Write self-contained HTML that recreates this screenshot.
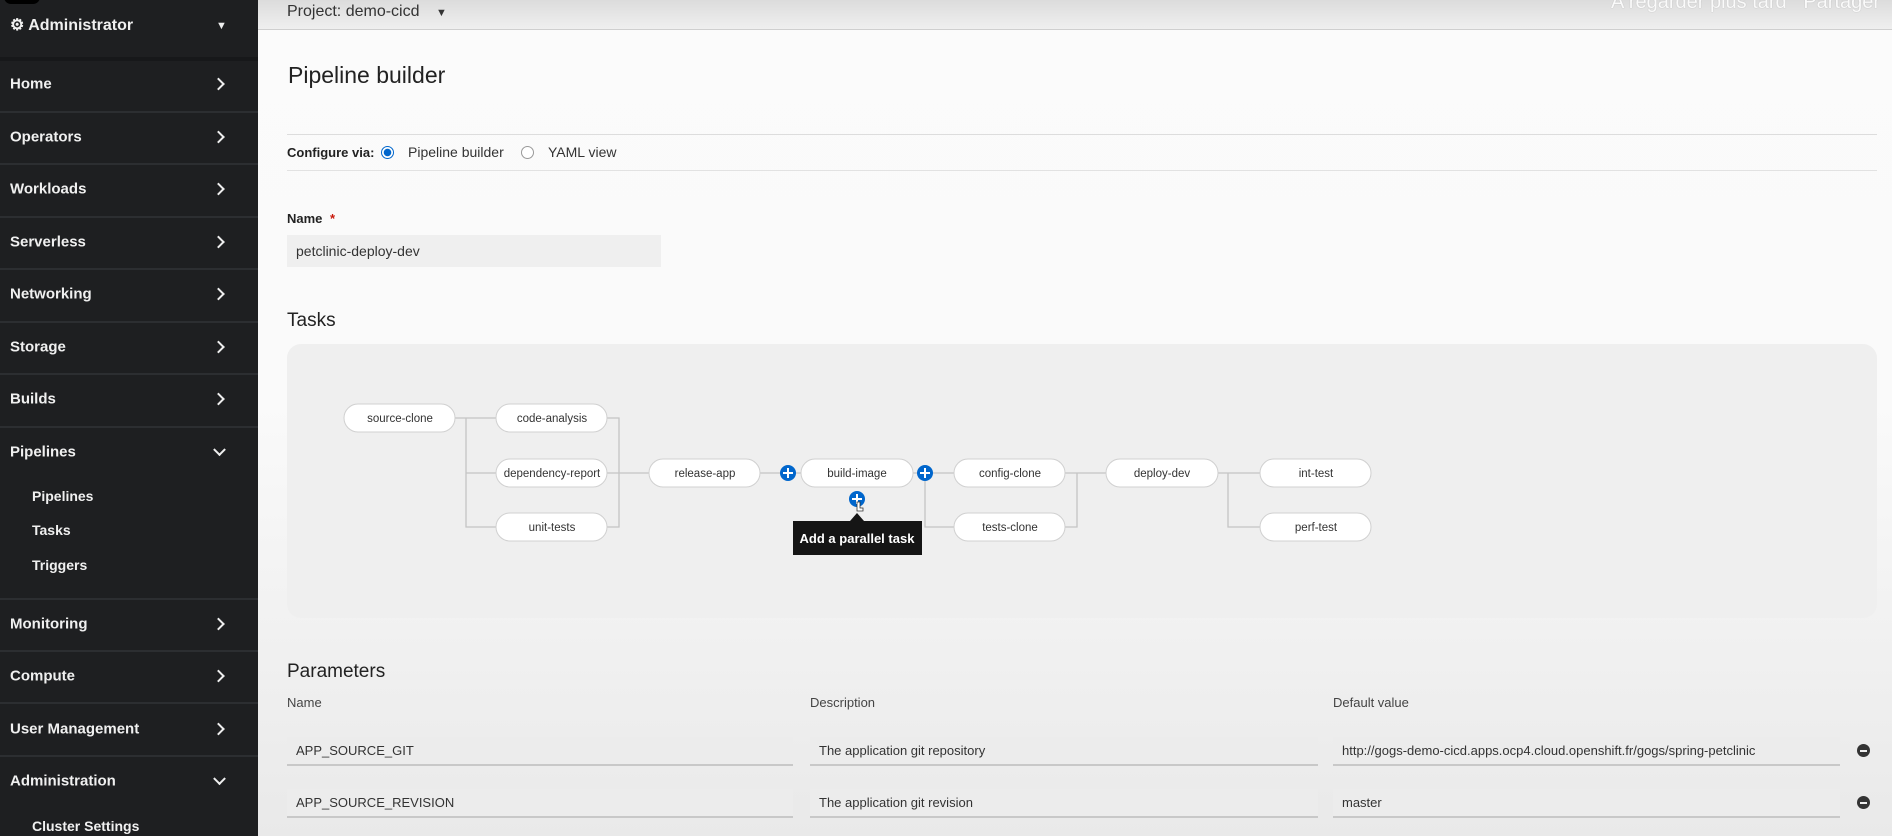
<!DOCTYPE html>
<html><head><meta charset="utf-8"><style>
*{box-sizing:border-box;margin:0;padding:0}
body{width:1892px;height:836px;overflow:hidden;font-family:"Liberation Sans",sans-serif;background:linear-gradient(#fbfbfb 0px,#fafafa 400px,#e9e9e9 836px);position:relative}
.sb{position:absolute;left:0;top:0;width:258px;height:836px;background:#1e1f21}
.it{position:absolute;left:10px;color:#f0f0f0;font-size:15px;font-weight:bold;transform:translateY(-50%)}
.sub{position:absolute;left:32px;color:#f0f0f0;font-size:14px;font-weight:bold;transform:translateY(-50%)}
.chev{position:absolute;left:214px;width:9px;height:9px;border-right:2.5px solid #eee;border-top:2.5px solid #eee;transform:translateY(-50%) rotate(45deg)}
.chd{position:absolute;left:215px;width:9px;height:9px;border-right:2.5px solid #eee;border-bottom:2.5px solid #eee;transform:translateY(-75%) rotate(45deg)}
.sep{position:absolute;left:0;width:258px;height:2px;background:#2c2e31}
.a{position:absolute;color:#222}
.inp{position:absolute;background:#ececec;border-bottom:2px solid #c8c8c8;font-size:13px;color:#333;padding-left:9px;display:flex;align-items:center}
</style></head><body>
<div style="position:absolute;left:258px;top:0;width:1634px;height:30px;background:linear-gradient(#dcdcdc,#efefef);border-bottom:1px solid #cfcfcf"></div>
<div class="a" style="left:287px;top:3px;font-size:16px;color:#333">Project: demo-cicd <span style="font-size:11px;margin-left:12px">▼</span></div>
<div class="a" style="left:1611px;top:-9px;font-size:20px;color:#fafafa;text-shadow:0 0 1px #aaa">A regarder plus tard &nbsp; Partager</div>

<div class="sb">
<div style="position:absolute;left:4px;top:-10px;width:36px;height:14px;border-radius:8px;background:#000"></div>
<div class="it" style="top:25px;font-size:16px">⚙ Administrator</div><div style="position:absolute;left:216px;top:20px;font-size:11px;color:#eee">▼</div>
<div class="sep" style="top:57px;height:4px;background:#17181a"></div>
<div class="it" style="top:84px">Home</div><div class="chev" style="top:84px"></div>
<div class="sep" style="top:111px"></div>
<div class="it" style="top:137px">Operators</div><div class="chev" style="top:137px"></div>
<div class="sep" style="top:163px"></div>
<div class="it" style="top:189px">Workloads</div><div class="chev" style="top:189px"></div>
<div class="sep" style="top:216px"></div>
<div class="it" style="top:242px">Serverless</div><div class="chev" style="top:242px"></div>
<div class="sep" style="top:268px"></div>
<div class="it" style="top:294px">Networking</div><div class="chev" style="top:294px"></div>
<div class="sep" style="top:321px"></div>
<div class="it" style="top:347px">Storage</div><div class="chev" style="top:347px"></div>
<div class="sep" style="top:373px"></div>
<div class="it" style="top:399px">Builds</div><div class="chev" style="top:399px"></div>
<div class="sep" style="top:426px"></div>
<div class="it" style="top:452px">Pipelines</div><div class="chd" style="top:452px"></div>
<div class="sub" style="top:496px">Pipelines</div>
<div class="sub" style="top:530px">Tasks</div>
<div class="sub" style="top:565px">Triggers</div>
<div class="sep" style="top:598px"></div>
<div class="it" style="top:624px">Monitoring</div><div class="chev" style="top:624px"></div>
<div class="sep" style="top:650px"></div>
<div class="it" style="top:676px">Compute</div><div class="chev" style="top:676px"></div>
<div class="sep" style="top:702px"></div>
<div class="it" style="top:729px">User Management</div><div class="chev" style="top:729px"></div>
<div class="sep" style="top:755px"></div>
<div class="it" style="top:781px">Administration</div><div class="chd" style="top:781px"></div>
<div class="sub" style="top:826px">Cluster Settings</div>
</div>

<div class="a" style="left:288px;top:62px;font-size:23px">Pipeline builder</div>
<div style="position:absolute;left:287px;top:134px;width:1590px;height:1px;background:#ddd"></div>
<div class="a" style="left:287px;top:145px;font-size:13px;font-weight:bold">Configure via:</div>
<div style="position:absolute;left:381px;top:146px;width:13px;height:13px;border-radius:50%;border:1px solid #06c;background:radial-gradient(#06c 3.5px,#fff 4px)"></div>
<div class="a" style="left:408px;top:144px;font-size:14px;color:#333">Pipeline builder</div>
<div style="position:absolute;left:521px;top:146px;width:13px;height:13px;border-radius:50%;border:1px solid #999;background:#fff"></div>
<div class="a" style="left:548px;top:144px;font-size:14px;color:#333">YAML view</div>
<div style="position:absolute;left:287px;top:170px;width:1590px;height:1px;background:#e2e2e2"></div>
<div class="a" style="left:287px;top:211px;font-size:13px;font-weight:bold">Name <span style="color:#c9190b;margin-left:4px">*</span></div>
<div class="inp" style="left:287px;top:235px;width:374px;height:32px;background:#efefef;border:none;font-size:14px">petclinic-deploy-dev</div>
<div class="a" style="left:287px;top:310px;font-size:19px">Tasks</div>
<div style="position:absolute;left:287px;top:344px;width:1590px;height:274px;background:#efefef;border-radius:14px"></div>

<svg style="position:absolute;left:0;top:0" width="1892" height="836" font-family="Liberation Sans, sans-serif" font-size="11.5" fill="#333">
<g stroke="#c4c4c4" stroke-width="1.3" fill="none">
<path d="M455 418H496M466 418V527H496M466 473H496"/>
<path d="M607 418H619V527H607M607 473H649"/>
<path d="M760 473H801M913 473H954M925 473V527H954"/>
<path d="M1065 473H1106M1077 473V527H1065"/>
<path d="M1218 473H1260M1228 473V527H1260"/>
</g>
<g fill="#fff" stroke="#d0d0d0" stroke-width="1">
<rect x="344" y="404" width="111" height="28" rx="14"/>
<rect x="496" y="404" width="111" height="28" rx="14"/>
<rect x="496" y="459" width="111" height="28" rx="14"/>
<rect x="496" y="513" width="111" height="28" rx="14"/>
<rect x="649" y="459" width="111" height="28" rx="14"/>
<rect x="801" y="459" width="112" height="28" rx="14"/>
<rect x="954" y="459" width="111" height="28" rx="14"/>
<rect x="954" y="513" width="111" height="28" rx="14"/>
<rect x="1106" y="459" width="112" height="28" rx="14"/>
<rect x="1260" y="459" width="111" height="28" rx="14"/>
<rect x="1260" y="513" width="111" height="28" rx="14"/>
</g>
<g text-anchor="middle">
<text x="400" y="422">source-clone</text>
<text x="552" y="422">code-analysis</text>
<text x="552" y="477">dependency-report</text>
<text x="552" y="531">unit-tests</text>
<text x="705" y="477">release-app</text>
<text x="857" y="477">build-image</text>
<text x="1010" y="477">config-clone</text>
<text x="1010" y="531">tests-clone</text>
<text x="1162" y="477">deploy-dev</text>
<text x="1316" y="477">int-test</text>
<text x="1316" y="531">perf-test</text>
</g>
<g>
<circle cx="788" cy="473" r="8" fill="#0066cc"/><path d="M788 468v10M783 473h10" stroke="#fff" stroke-width="2"/>
<circle cx="925" cy="473" r="8" fill="#0066cc"/><path d="M925 468v10M920 473h10" stroke="#fff" stroke-width="2"/>
<circle cx="857" cy="499" r="8" fill="#0066cc"/><path d="M857 494v10M852 499h10" stroke="#fff" stroke-width="2"/>
<path d="M857 502l3 0 0 6 3 0 0 3-6 0z" fill="#fff" stroke="#333" stroke-width="0.8"/>
</g>
<path d="M850 521L857 513L864 521Z" fill="#151515"/>
<rect x="793" y="521" width="129" height="34" fill="#151515"/>
<text x="857" y="543" fill="#fff" font-size="13" font-weight="bold" text-anchor="middle">Add a parallel task</text>
</svg>

<div class="a" style="left:287px;top:661px;font-size:19px">Parameters</div>
<div class="a" style="left:287px;top:695px;font-size:13px;color:#444">Name</div>
<div class="a" style="left:810px;top:695px;font-size:13px;color:#444">Description</div>
<div class="a" style="left:1333px;top:695px;font-size:13px;color:#444">Default value</div>
<div class="inp" style="left:287px;top:737px;width:506px;height:29px">APP_SOURCE_GIT</div>
<div class="inp" style="left:810px;top:737px;width:508px;height:29px">The application git repository</div>
<div class="inp" style="left:1333px;top:737px;width:507px;height:29px">http://gogs-demo-cicd.apps.ocp4.cloud.openshift.fr/gogs/spring-petclinic</div>
<div class="inp" style="left:287px;top:789px;width:506px;height:29px">APP_SOURCE_REVISION</div>
<div class="inp" style="left:810px;top:789px;width:508px;height:29px">The application git revision</div>
<div class="inp" style="left:1333px;top:789px;width:507px;height:29px">master</div>
<div style="position:absolute;left:1857px;top:744px;width:13px;height:13px;border-radius:50%;background:#333"><div style="position:absolute;left:3px;top:5.5px;width:7px;height:2px;background:#eee"></div></div>
<div style="position:absolute;left:1857px;top:796px;width:13px;height:13px;border-radius:50%;background:#333"><div style="position:absolute;left:3px;top:5.5px;width:7px;height:2px;background:#eee"></div></div>
</body></html>
